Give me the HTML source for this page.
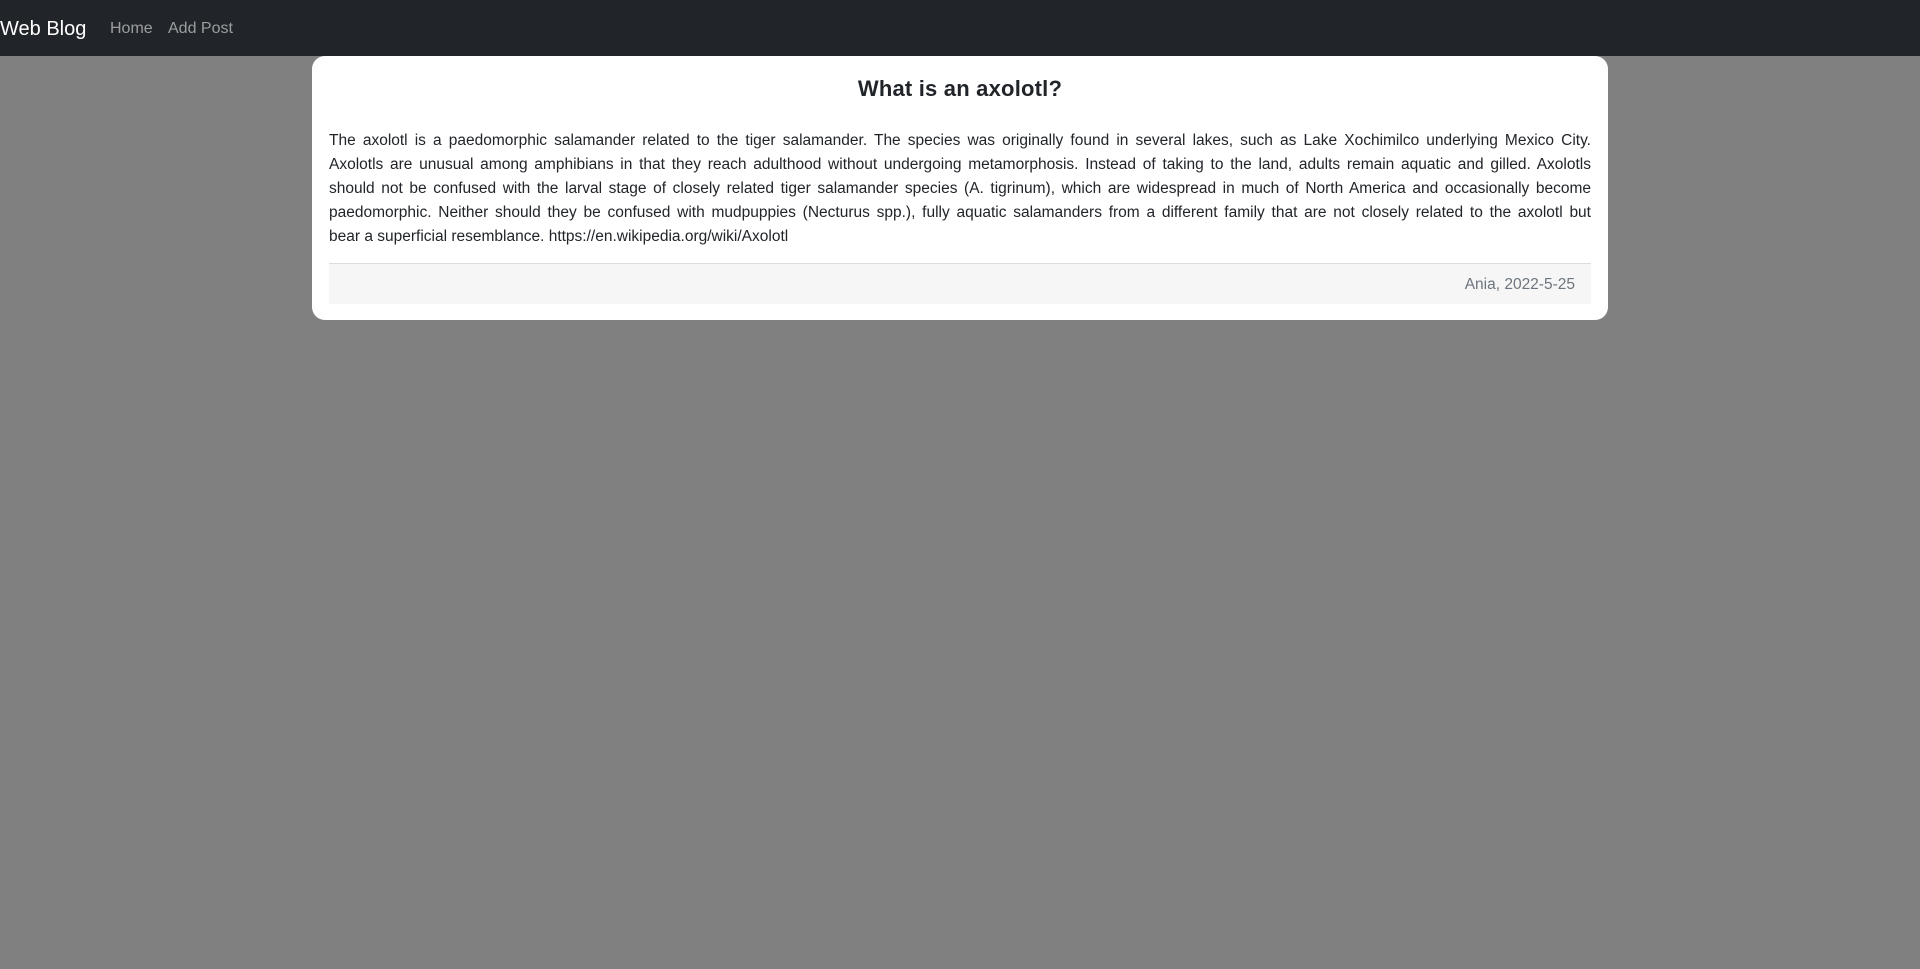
<!DOCTYPE html>
<html><head><meta charset="utf-8"><style>
body{margin:0;background:#808080;font-family:"Liberation Sans",sans-serif;width:1920px;height:969px;overflow:hidden;}
.nav{height:56px;background:#212529;position:relative;}
.brand{position:absolute;left:0;top:15px;font-size:20px;color:#fff;line-height:28px;}
.l{position:absolute;top:18px;font-size:16px;color:rgba(255,255,255,.55);line-height:22px;}
.card{position:absolute;left:312px;top:56px;width:1296px;height:264px;background:#fff;border-radius:13px;}
h1{margin:0;position:absolute;left:0;right:0;text-align:center;font-size:22px;font-weight:bold;color:#212529;line-height:30px;letter-spacing:0.2px;}
.txt{position:absolute;left:17px;width:1262px;top:73px;font-size:15.5px;line-height:24px;color:#212529;}
.txt span{display:block;text-align:justify;text-align-last:justify;}
.txt span.last{text-align-last:left;}
.ft{position:absolute;left:17px;width:1262px;top:207px;height:40px;background:#f6f6f6;border-top:1px solid #ddd;}
.ft div{position:absolute;right:16px;top:12px;font-size:15.5px;color:#6c757d;}
</style></head><body>
<div class="nav"><div class="brand">Web Blog</div><div class="l" style="left:110px">Home</div><div class="l" style="left:168px">Add Post</div></div>
<div class="card">
<h1 style="top:18px">What is an axolotl?</h1>
<div class="txt">
<span>The axolotl is a paedomorphic salamander related to the tiger salamander. The species was originally found in several lakes, such as Lake Xochimilco underlying Mexico City.</span>
<span>Axolotls are unusual among amphibians in that they reach adulthood without undergoing metamorphosis. Instead of taking to the land, adults remain aquatic and gilled. Axolotls</span>
<span>should not be confused with the larval stage of closely related tiger salamander species (A. tigrinum), which are widespread in much of North America and occasionally become</span>
<span>paedomorphic. Neither should they be confused with mudpuppies (Necturus spp.), fully aquatic salamanders from a different family that are not closely related to the axolotl but</span>
<span class="last">bear a superficial resemblance. https://en.wikipedia.org/wiki/Axolotl</span>
</div>
<div class="ft"><div>Ania, 2022-5-25</div></div>
</div>
</body></html>
